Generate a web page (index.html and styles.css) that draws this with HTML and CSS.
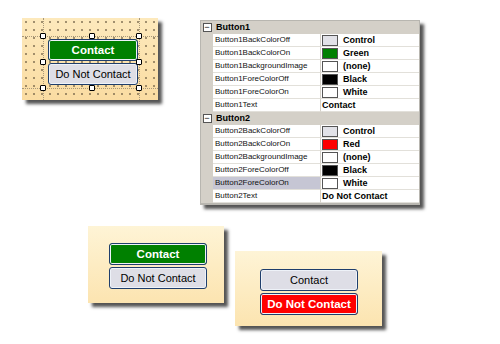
FILE: index.html
```html
<!DOCTYPE html>
<html>
<head>
<title>Button toggle properties</title>
<link rel="stylesheet" href="styles.css">
</head>
<body>
<div class="top">
    <div class="panel designer">
        <div class="snap snapV1"></div>
        <div class="snap snapV2"></div>
        <div class="snap snapH1"></div>
        <div class="snap snapH2"></div>
        <div class="btn on green">Contact</div>
        <div class="btn off">Do Not Contact</div>
        <span class="handle" style="left:21px;top:18px"></span>
        <span class="handle" style="left:70px;top:18px"></span>
        <span class="handle" style="left:117px;top:18px"></span>
        <span class="handle" style="left:21px;top:44px"></span>
        <span class="handle" style="left:117px;top:44px"></span>
        <span class="handle" style="left:21px;top:70px"></span>
        <span class="handle" style="left:70px;top:70px"></span>
        <span class="handle" style="left:117px;top:70px"></span>
    </div>
    <div class="props">
        <div class="row head"><div class="gut"><span class="minus">−</span></div><div class="cat">Button1</div></div>
        <div class="row"><div class="gut"></div><div class="name">Button1BackColorOff</div><div class="val"><span class="sw" style="background:#e2e2e8"></span>Control</div></div>
        <div class="row"><div class="gut"></div><div class="name">Button1BackColorOn</div><div class="val"><span class="sw" style="background:#008000"></span>Green</div></div>
        <div class="row"><div class="gut"></div><div class="name">Button1BackgroundImage</div><div class="val"><span class="sw"></span>(none)</div></div>
        <div class="row"><div class="gut"></div><div class="name">Button1ForeColorOff</div><div class="val"><span class="sw" style="background:#000"></span>Black</div></div>
        <div class="row"><div class="gut"></div><div class="name">Button1ForeColorOn</div><div class="val"><span class="sw"></span>White</div></div>
        <div class="row"><div class="gut"></div><div class="name">Button1Text</div><div class="val">Contact</div></div>
        <div class="row head"><div class="gut"><span class="minus">−</span></div><div class="cat">Button2</div></div>
        <div class="row"><div class="gut"></div><div class="name">Button2BackColorOff</div><div class="val"><span class="sw" style="background:#e2e2e8"></span>Control</div></div>
        <div class="row"><div class="gut"></div><div class="name">Button2BackColorOn</div><div class="val"><span class="sw" style="background:#ff0000"></span>Red</div></div>
        <div class="row"><div class="gut"></div><div class="name">Button2BackgroundImage</div><div class="val"><span class="sw"></span>(none)</div></div>
        <div class="row"><div class="gut"></div><div class="name">Button2ForeColorOff</div><div class="val"><span class="sw" style="background:#000"></span>Black</div></div>
        <div class="row"><div class="gut"></div><div class="name sel">Button2ForeColorOn</div><div class="val"><span class="sw"></span>White</div></div>
        <div class="row"><div class="gut"></div><div class="name">Button2Text</div><div class="val">Do Not Contact</div></div>
    </div>
</div>
<div class="bottom">
    <div class="panel demo1">
        <div class="btn on green">Contact</div>
        <div class="btn off">Do Not Contact</div>
    </div>
    <div class="panel demo2">
        <div class="btn off">Contact</div>
        <div class="btn on red">Do Not Contact</div>
    </div>
</div>
</body>
</html>
```
FILE: styles.css
```css
body {
    margin: 0;
    background-color: white;
    font-family: "Liberation Sans", Arial, sans-serif;
    width: 500px;
    height: 344px;
    overflow: hidden;
}
div.top {
    display: flex;
    align-items: flex-start;
    padding-top: 18px;
}
div.bottom {
    display: flex;
    align-items: flex-start;
    margin-top: 21px;
}
div.panel {
    position: relative;
    box-sizing: border-box;
    display: flex;
    flex-direction: column;
    gap: 2px;
    background: linear-gradient(#fef4d6, #fce4b0);
    box-shadow: 4px 4px 3px #555;
}
div.designer {
    margin-left: 22px;
    width: 136px;
    height: 82px;
    padding: 21px 0 0 26px;
    background:
        radial-gradient(circle at 1px 1px, #6e5e44 0.6px, transparent 0.9px) 3px 3px / 8px 8px,
        linear-gradient(#fde9bc, #fadca2);
}
div.demo1 {
    margin-left: 88px;
    width: 136px;
    height: 77px;
    padding: 17px 0 0 21px;
}
div.demo2 {
    margin-left: 11px;
    margin-top: 25px;
    width: 147px;
    height: 75px;
    padding: 18px 0 0 25px;
}
div.btn {
    box-sizing: border-box;
    width: 98px;
    height: 22px;
    border: 1px solid #1f3e6c;
    border-radius: 3px;
    box-shadow: inset 0 0 0 1px #eef2f8;
    display: flex;
    align-items: center;
    justify-content: center;
    font-size: 11px;
    color: black;
    background-color: #dedee6;
}
div.designer div.btn {
    width: 90px;
}
div.btn.on {
    color: white;
    font-weight: bold;
    font-size: 11.5px;
}
div.btn.green {
    background-color: #008000;
}
div.btn.red {
    background-color: #ff0000;
}
span.handle {
    position: absolute;
    box-sizing: border-box;
    width: 6px;
    height: 6px;
    margin: -3px 0 0 -3px;
    border: 1px solid black;
    border-radius: 1px;
    background-color: white;
}
div.snap {
    position: absolute;
    border: 0 dotted #a8987a;
}
div.snapV1 { left: 21px; top: 0; bottom: 0; border-left-width: 1px; }
div.snapV2 { left: 117px; top: 0; bottom: 0; border-left-width: 1px; }
div.snapH1 { top: 18px; left: 0; right: 0; border-top-width: 1px; }
div.snapH2 { top: 70px; left: 0; right: 0; border-top-width: 1px; }

div.props {
    margin-left: 42px;
    margin-top: 2px;
    width: 220px;
    box-sizing: border-box;
    border: 1px solid #b8b6b0;
    border-bottom-width: 2px;
    background-color: white;
    box-shadow: 4px 4px 3px #555;
}
div.row {
    display: grid;
    grid-template-columns: 12px 108px 1fr;
    height: 13px;
    font-size: 8px;
    color: #111;
}
div.row.head {
    grid-template-columns: 12px 1fr;
    background-color: #d4d0c8;
}
div.gut {
    background-color: #d4d0c8;
    display: flex;
    align-items: center;
    justify-content: center;
}
span.minus {
    box-sizing: border-box;
    width: 9px;
    height: 9px;
    border: 1px solid #555;
    background-color: white;
    font-size: 9px;
    line-height: 6px;
    text-align: center;
    color: black;
}
div.cat {
    font-weight: bold;
    font-size: 9px;
    color: black;
    padding-left: 3px;
    line-height: 13px;
}
div.name {
    padding-left: 2px;
    line-height: 12px;
    border-bottom: 1px solid #e2e0da;
    border-right: 1px solid #d4d0c8;
    white-space: nowrap;
    overflow: hidden;
}
div.name.sel {
    background-color: #c6c6d4;
}
div.val {
    display: flex;
    align-items: center;
    padding-left: 1px;
    border-bottom: 1px solid #e2e0da;
    font-weight: bold;
    font-size: 9px;
    color: black;
    white-space: nowrap;
}
span.sw {
    box-sizing: border-box;
    width: 16px;
    height: 11px;
    border: 1px solid #555;
    background-color: white;
    margin-right: 5px;
}
```
